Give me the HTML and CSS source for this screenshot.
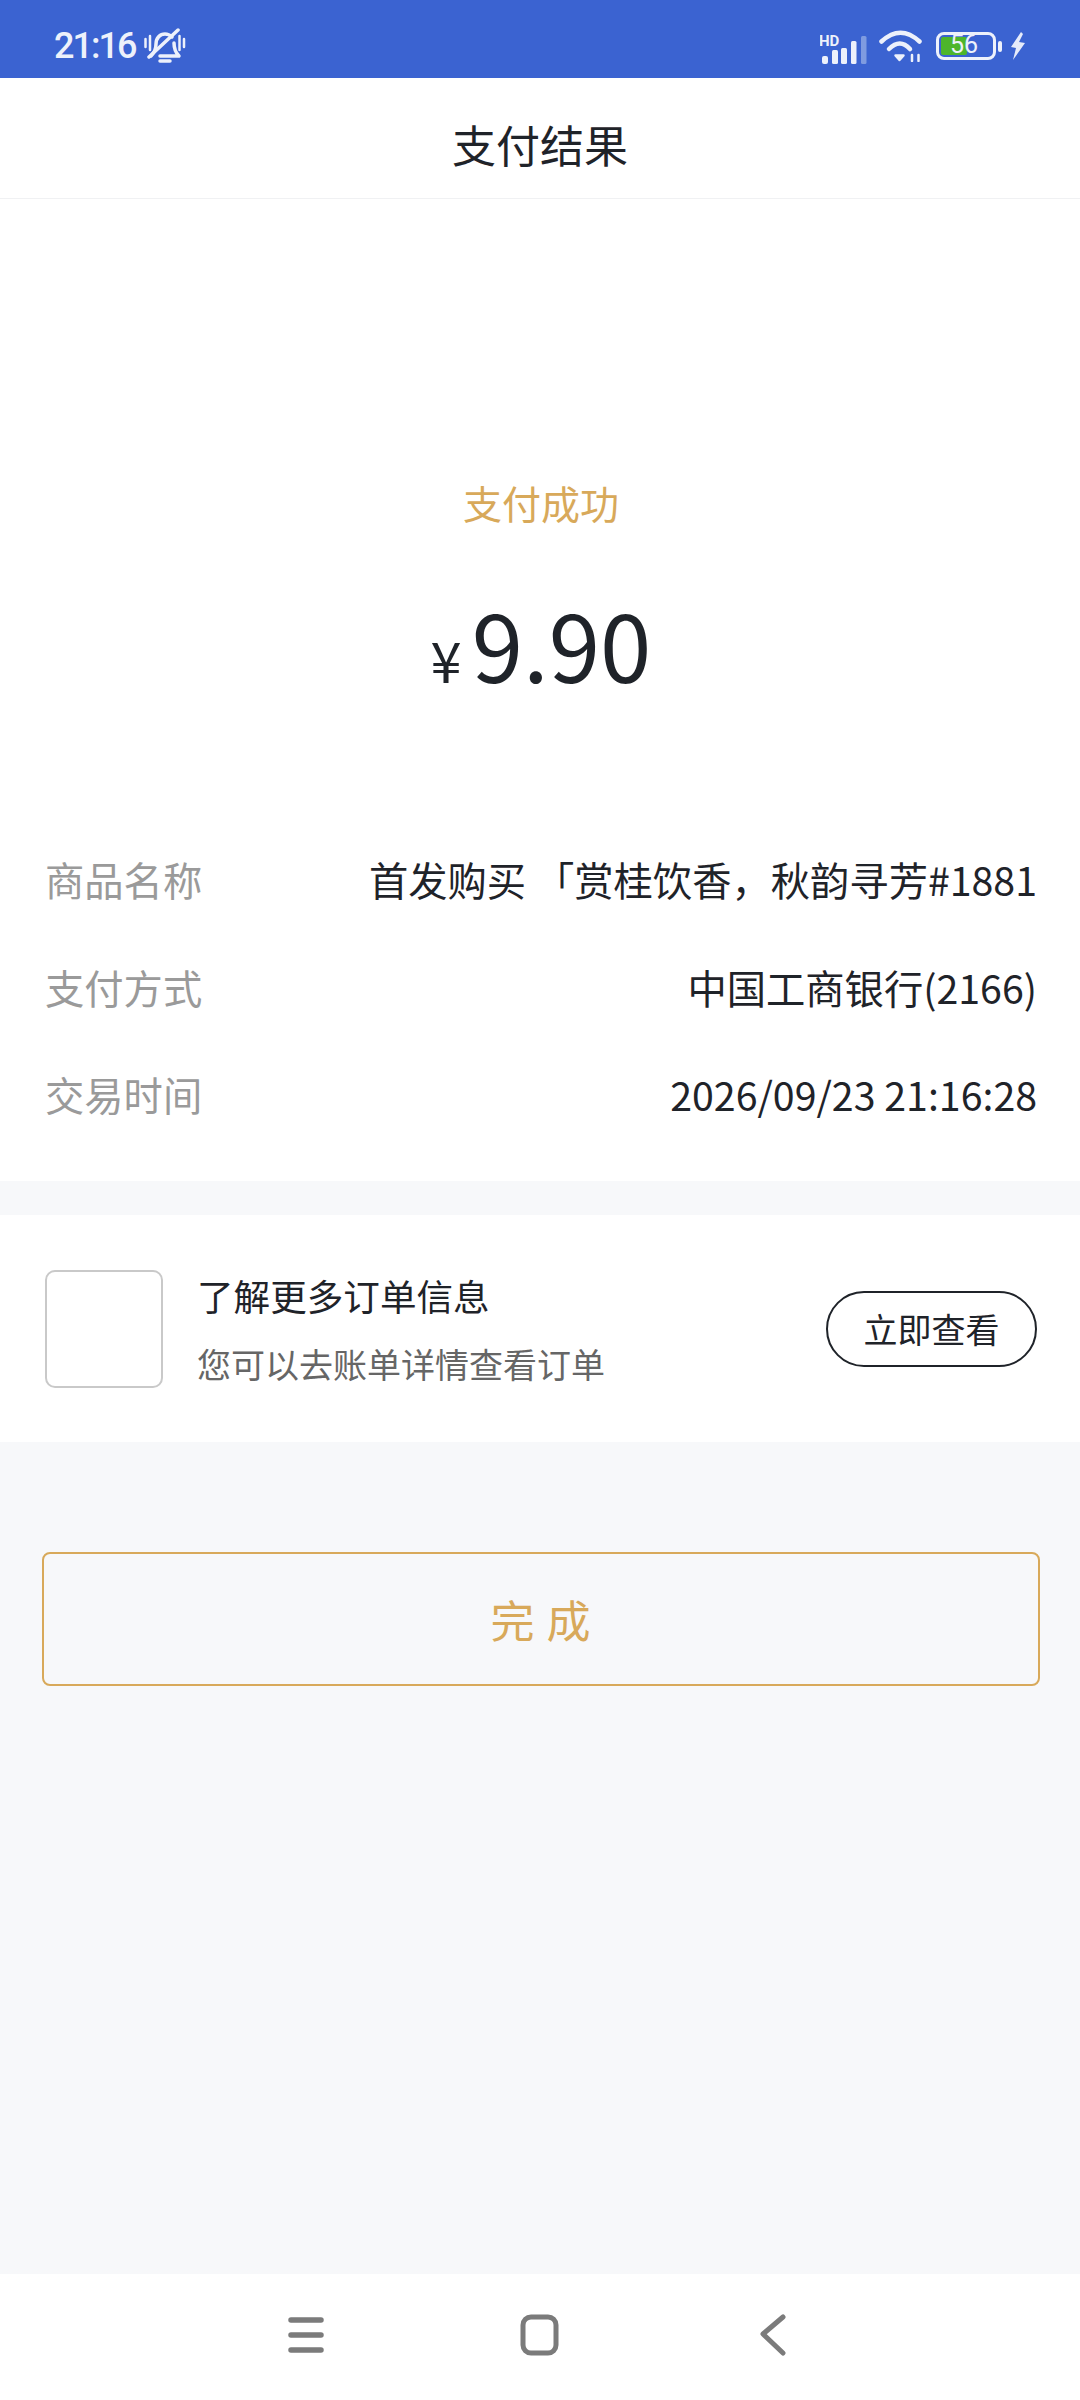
FILE: index.html
```html
<!DOCTYPE html>
<html lang="zh-CN">
<head>
    <meta charset="UTF-8">
    <meta name="viewport" content="width=device-width, initial-scale=1.0">
    <title>支付结果</title>
    <link rel="stylesheet" href="styles.css">
</head>
<body>
    <div class="status-bar">
        <div class="status-left">
            <span class="clock">21:16</span>
            <svg class="icon-bell" width="42" height="36" viewBox="0 0 42 36" fill="none" stroke="#edf1fb" stroke-width="3.500" stroke-linecap="round" stroke-linejoin="round">
                <path d="M1.500 11v8M6 8v14M35.500 8v14M40 11v8" stroke-width="2.500"/>
                <path d="M7 28c3-3 5-6 5-12 0-6 4-10 9-10 3 0 5 1 7 3"/>
                <path d="M30 15c0 6 2 10 5 13H16"/>
                <path d="M5 29L34 2"/>
                <path d="M16 33h10"/>
            </svg>
        </div>
        <div class="status-right">
            <svg class="icon-signal" width="47" height="38" viewBox="0 -8 47 38">
                <text x="-1" y="11" class="hd">HD</text>
                <rect x="2" y="21" width="6" height="8" rx="2" fill="#edf1fb"/>
                <rect x="12" y="15" width="6" height="14" rx="1.500" fill="#edf1fb"/>
                <rect x="21" y="13" width="6" height="16" rx="1.500" fill="#edf1fb"/>
                <rect x="31" y="6" width="5.500" height="23" rx="1.500" fill="#edf1fb"/>
                <rect x="41" y="1" width="5.500" height="28" rx="1.500" fill="#7f9be0"/>
            </svg>
            <svg class="icon-wifi" width="43" height="32" viewBox="0 0 43 32" fill="none" stroke="#edf1fb" stroke-width="4.500" stroke-linecap="round" stroke-linejoin="round">
                <path d="M2.500 11.500Q21.500 -6 40.500 11.500"/>
                <path d="M10 19Q21 8 31 19"/>
                <path d="M16.500 25.500h8L20.500 30z" fill="#edf1fb" stroke-width="2.500"/>
                <path d="M33 25v6M39.500 25v6" stroke-width="2.500"/>
            </svg>
            <div class="battery">
                <div class="battery-body">
                    <div class="battery-fill"></div>
                    <span class="battery-num">56</span>
                </div>
                <div class="battery-cap"></div>
            </div>
            <svg class="icon-bolt" width="15" height="28" viewBox="0 0 15 28">
                <path d="M11 0L1 15l5 1-3 12L15 11l-6-1 4-8z" fill="#e6ebfa"/>
            </svg>
        </div>
    </div>

    <div class="nav-bar">支付结果</div>

    <div class="result-card">
        <div class="result-status">支付成功</div>
        <div class="result-amount">
            <span class="currency">¥</span><span class="amount">9.90</span>
        </div>
        <div class="info-row">
            <span class="info-label">商品名称</span>
            <span class="info-value">首发购买 「赏桂饮香，秋韵寻芳#1881</span>
        </div>
        <div class="info-row">
            <span class="info-label">支付方式</span>
            <span class="info-value">中国工商银行(2166)</span>
        </div>
        <div class="info-row">
            <span class="info-label">交易时间</span>
            <span class="info-value">2026/09/23 21:16:28</span>
        </div>
    </div>

    <div class="order-card">
        <div class="order-thumb"></div>
        <div class="order-text">
            <div class="order-title">了解更多订单信息</div>
            <div class="order-desc">您可以去账单详情查看订单</div>
        </div>
        <button class="order-btn">立即查看</button>
    </div>

    <div class="main-fill">
        <button class="done-btn">完 成</button>
    </div>

    <div class="bottom-nav">
        <svg width="40" height="38" viewBox="0 0 40 38" fill="none" stroke="#7b7b7b" stroke-width="5.500" stroke-linecap="round">
            <path d="M4 4h30M4 19h30M4 34h30" />
        </svg>
        <svg width="40" height="44" viewBox="0 0 40 44" fill="none" stroke="#7b7b7b" stroke-width="5">
            <rect x="3" y="4" width="33" height="36" rx="8"/>
        </svg>
        <svg class="nav-back" width="30" height="44" viewBox="0 0 30 44" fill="none" stroke="#7b7b7b" stroke-width="5" stroke-linecap="round" stroke-linejoin="round">
            <path d="M25 4L5 21l20 19"/>
        </svg>
    </div>
</body>
</html>
```

FILE: styles.css
```css
* {
    box-sizing: border-box;
}

body {
    font-family: "Noto Sans CJK SC", "Noto Sans", sans-serif;
    margin: 0;
    width: 1080px;
    height: 2400px;
    display: flex;
    flex-direction: column;
    background-color: #f7f8fa;
    color: #1f2329;
}

.status-bar {
    height: 78px;
    background-color: #3b63d1;
    display: flex;
    justify-content: space-between;
    align-items: center;
    padding: 14px 55px 0 54px;
}

.status-left,
.status-right {
    display: flex;
    align-items: center;
}

.clock {
    font-family: Roboto, sans-serif;
    font-size: 36px;
    font-weight: 500;
    letter-spacing: -2px;
    color: #edf1fb;
}

.icon-bell {
    margin-left: 9px;
}

.hd {
    font-family: Roboto, sans-serif;
    font-size: 15px;
    font-weight: 700;
    fill: #edf1fb;
}

.icon-wifi {
    margin-left: 12px;
}

.battery {
    display: flex;
    align-items: center;
    margin-left: 14px;
}

.battery-body {
    position: relative;
    width: 60px;
    height: 28px;
    border: 3px solid #edf1fb;
    border-radius: 8px;
    padding: 2px;
}

.battery-fill {
    width: 26px;
    height: 100%;
    background-color: #4db52b;
    border-radius: 2px;
}

.battery-num {
    position: absolute;
    left: 11px;
    top: -5px;
    font-family: Roboto, sans-serif;
    font-size: 25px;
    line-height: 30px;
    color: #edf1fb;
}

.battery-cap {
    width: 4px;
    height: 11px;
    margin-left: 2px;
    background-color: #edf1fb;
    border-radius: 2px;
}

.icon-bolt {
    margin-left: 8px;
}

.nav-bar {
    height: 121px;
    background-color: white;
    border-bottom: 1px solid #f0f1f3;
    display: flex;
    align-items: center;
    justify-content: center;
    padding-top: 12px;
    font-size: 44px;
}

.result-card {
    background-color: white;
    height: 982px;
    padding: 0 43px 0 45px;
}

.result-status {
    margin-top: 275px;
    text-align: center;
    font-size: 39px;
    line-height: 56px;
    color: #d8a95a;
}

.result-amount {
    margin-top: 52px;
    margin-bottom: 105px;
    display: flex;
    justify-content: center;
    align-items: baseline;
    line-height: 122px;
}

.currency {
    font-size: 56px;
    margin-right: 10px;
}

.amount {
    font-size: 92.500px;
}

.info-row {
    display: flex;
    justify-content: space-between;
    height: 107.500px;
    align-items: center;
    font-size: 39.300px;
}

.info-label {
    color: #9a9a9a;
}

.info-value {
    color: #1f2329;
}

.order-card {
    margin-top: 34px;
    height: 227px;
    background-color: white;
    display: flex;
    align-items: center;
    padding: 0 43px 0 45px;
}

.order-thumb {
    width: 118px;
    height: 118px;
    border: 2px solid #c9c9c9;
    border-radius: 10px;
}

.order-text {
    flex: 1;
    margin-left: 34px;
    padding-bottom: 1px;
}

.order-title {
    font-size: 36.600px;
    line-height: 56px;
}

.order-desc {
    margin-top: 16px;
    font-size: 34px;
    line-height: 48px;
    color: #666;
}

.order-btn {
    width: 211px;
    height: 76px;
    background-color: white;
    border: 2px solid #1f2329;
    border-radius: 38px;
    font-family: inherit;
    font-size: 34px;
    color: #1f2329;
    padding: 0;
}

.main-fill {
    flex: 1;
    padding: 110px 40px 0 42px;
}

.done-btn {
    width: 100%;
    height: 134px;
    background-color: transparent;
    border: 2px solid #d8a95a;
    border-radius: 8px;
    font-family: inherit;
    font-size: 44px;
    letter-spacing: 1px;
    color: #d8a95a;
    padding: 0;
}

.bottom-nav {
    height: 126px;
    background-color: white;
    display: flex;
    align-items: center;
    padding: 0 0 4px 287px;
    gap: 193px;
}

.nav-back {
    margin-left: 5px;
}
```
